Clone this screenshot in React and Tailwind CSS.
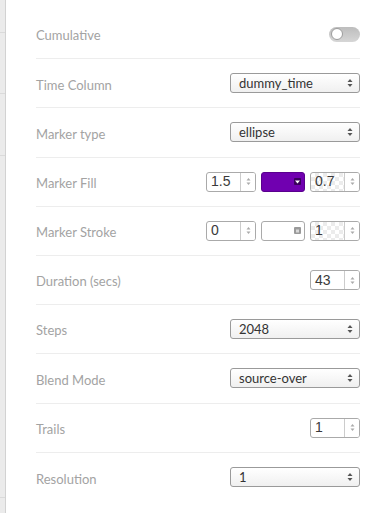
import React from 'react'

const Arrows = () => (
  <svg width="6" height="10" viewBox="0 0 6 10" className="shrink-0">
    <path d="M3 1 L5.5 4 L0.5 4 Z" fill="#555" />
    <path d="M3 9 L5.5 6 L0.5 6 Z" fill="#555" />
  </svg>
)

const SpinArrows = () => (
  <svg width="5" height="9" viewBox="0 0 5 9">
    <path d="M2.5 1 L4.5 3.5 L0.5 3.5 Z" fill="#aaa" />
    <path d="M2.5 8 L4.5 5.5 L0.5 5.5 Z" fill="#aaa" />
  </svg>
)

const Select = ({ value }) => (
  <div className="w-[130px] h-[20px] rounded-[3px] border border-[#9a9a9a] bg-gradient-to-b from-white to-[#f0f0f0] flex items-center justify-between pl-[8px] pr-[6px] text-[13px] text-[#333] font-['Lato',sans-serif]">
    <span className="pt-[1px]">{value}</span>
    <Arrows />
  </div>
)

const NumberInput = ({ value, checker = false }) => (
  <div
    className={
      'w-[50px] h-[20px] rounded-[3px] border border-[#aaa] flex items-stretch overflow-hidden ' +
      (checker
        ? 'bg-[repeating-conic-gradient(#ececec_0%_25%,#ffffff_0%_50%)] bg-[length:8px_8px]'
        : 'bg-white')
    }
  >
    <span className="flex-1 flex items-center pl-[4px] text-[14px] text-[#3a3a3a] font-['Liberation_Sans',Arial,sans-serif]">
      {value}
    </span>
    <span className="w-[15px] border-l border-[#ccc] bg-white flex items-center justify-center">
      <SpinArrows />
    </span>
  </div>
)

const ColorPicker = ({ color }) => {
  const filled = !!color
  return (
    <div
      className={
        'w-[44px] h-[20px] rounded-[3px] border flex items-center justify-end pr-[3px] ' +
        (filled ? 'bg-[#7000b0] border-[#5a008e]' : 'bg-white border-[#aaa]')
      }
    >
      <span
        className={
          'w-[7px] h-[7px] rounded-[1px] flex items-center justify-center ' +
          (filled ? 'bg-[#3a005c]' : 'bg-[#9a9a9a]')
        }
      >
        <svg width="5" height="4" viewBox="0 0 5 4">
          {filled ? <path d="M0 0.5 L5 0.5 L2.5 3.5 Z" fill="#fff" /> : <rect x="1" y="0.5" width="3" height="3" fill="#d8d8d8" />}
        </svg>
      </span>
    </div>
  )
}

const Toggle = () => (
  <div className="w-[31px] h-[15px] rounded-full bg-gradient-to-b from-[#bdbdbd] to-[#d6d6d6] flex items-center pl-[2px]">
    <span className="w-[12px] h-[12px] rounded-full bg-white border border-[#9c9c9c]" />
  </div>
)

const Row = ({ label, last = false, children }) => (
  <div className={'h-[49.2px] flex items-center justify-between ' + (last ? '' : 'border-b border-[#ededed]')}>
    <span className="pt-[4px] text-[13px] text-[#a3a3a3] font-['Lato',sans-serif]">{label}</span>
    <div className="flex items-center gap-[5px]">{children}</div>
  </div>
)

export default function App() {
  return (
    <div className="w-[386px] h-[513px] flex bg-white overflow-hidden">
      {/* side strip from the panel behind */}
      <div className="w-[6px] h-full bg-[#ebebeb] border-r border-[#d2d2d2] flex flex-col">
        <div className="h-[33px] border-b border-[#dadada]" />
        <div className="h-[61px] border-b border-[#dadada]" />
        <div className="h-[61.7px] border-b border-[#dadada]" />
        <div className="h-[342.3px] border-b border-[#dadada]" />
      </div>

      <div className="flex-1 pl-[30px] pr-[26px] pt-[10px]">
        <Row label="Cumulative">
          <Toggle />
        </Row>
        <Row label="Time Column">
          <Select value="dummy_time" />
        </Row>
        <Row label="Marker type">
          <Select value="ellipse" />
        </Row>
        <Row label="Marker Fill">
          <NumberInput value="1.5" />
          <ColorPicker color="#7000b0" />
          <NumberInput value="0.7" checker />
        </Row>
        <Row label="Marker Stroke">
          <NumberInput value="0" />
          <ColorPicker />
          <NumberInput value="1" checker />
        </Row>
        <Row label="Duration (secs)">
          <NumberInput value="43" />
        </Row>
        <Row label="Steps">
          <Select value="2048" />
        </Row>
        <Row label="Blend Mode">
          <Select value="source-over" />
        </Row>
        <Row label="Trails">
          <NumberInput value="1" />
        </Row>
        <Row label="Resolution" last>
          <Select value="1" />
        </Row>
      </div>
    </div>
  )
}
